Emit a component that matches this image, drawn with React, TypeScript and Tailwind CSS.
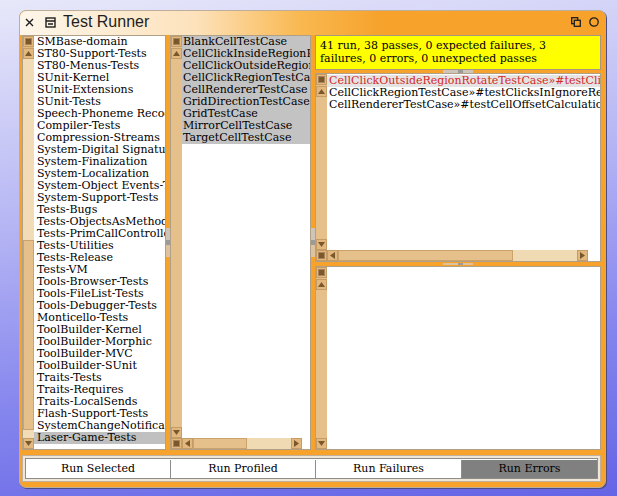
import React from "react";

const serif = "font-['DejaVu_Serif','Liberation_Serif',serif]";

const leftItems = [
  "SMBase-domain",
  "ST80-Support-Tests",
  "ST80-Menus-Tests",
  "SUnit-Kernel",
  "SUnit-Extensions",
  "SUnit-Tests",
  "Speech-Phoneme Recognition",
  "Compiler-Tests",
  "Compression-Streams",
  "System-Digital Signatures",
  "System-Finalization",
  "System-Localization",
  "System-Object Events-Tests",
  "System-Support-Tests",
  "Tests-Bugs",
  "Tests-ObjectsAsMethods",
  "Tests-PrimCallController",
  "Tests-Utilities",
  "Tests-Release",
  "Tests-VM",
  "Tools-Browser-Tests",
  "Tools-FileList-Tests",
  "Tools-Debugger-Tests",
  "Monticello-Tests",
  "ToolBuilder-Kernel",
  "ToolBuilder-Morphic",
  "ToolBuilder-MVC",
  "ToolBuilder-SUnit",
  "Traits-Tests",
  "Traits-Requires",
  "Traits-LocalSends",
  "Flash-Support-Tests",
  "SystemChangeNotification-Tests",
  "Laser-Game-Tests",
];

const midItems = [
  "BlankCellTestCase",
  "CellClickInsideRegionPlacementTestCase",
  "CellClickOutsideRegionRotateTestCase",
  "CellClickRegionTestCase",
  "CellRendererTestCase",
  "GridDirectionTestCase",
  "GridTestCase",
  "MirrorCellTestCase",
  "TargetCellTestCase",
];

const failures = [
  "CellClickOutsideRegionRotateTestCase»#testClicksInIgnoreRegion",
  "CellClickRegionTestCase»#testClicksInIgnoreRegion",
  "CellRendererTestCase»#testCellOffsetCalculation",
];

type K = "menu" | "up" | "down" | "left" | "right";

function SB({ k }: { k: K }) {
  return (
    <div className="w-[11px] h-[11px] shrink-0 bg-[#e2b87e] border border-[#c69c66] flex items-center justify-center">
      <svg width="7" height="7" viewBox="0 0 7 7" className="block">
        {k === "menu" && (
          <rect x="0.5" y="0.5" width="6" height="6" fill="#7a582c" stroke="#a88458" strokeWidth="1" />
        )}
        {k === "up" && <polygon points="3.5,1 7,6 0,6" fill="#7a582c" />}
        {k === "down" && <polygon points="0,1 7,1 3.5,6" fill="#7a582c" />}
        {k === "left" && <polygon points="1,3.5 6,0 6,7" fill="#7a582c" />}
        {k === "right" && <polygon points="1,0 6,3.5 1,7" fill="#7a582c" />}
      </svg>
    </div>
  );
}

function VHandle() {
  return (
    <div className="w-[4px] self-stretch flex flex-col justify-center">
      <div className="h-[12px] bg-[#cfc4b8]" />
      <div className="h-[5px] bg-[#9a9a9a]" />
      <div className="h-[12px] bg-[#dcc29e]" />
    </div>
  );
}

function HHandle({ light }: { light: string }) {
  return (
    <div className="flex justify-center items-center h-full">
      <div className={`w-[15px] h-full ${light}`} />
      <div className="w-[5px] h-full bg-[#9a9a9a]" />
      <div className={`w-[10px] h-full ${light}`} />
    </div>
  );
}

export default function App() {
  return (
    <div className="w-[617px] h-[496px] overflow-hidden bg-[linear-gradient(172deg,#e8e8fa_0%,#b4b4f4_40%,#8686ee_70%,#6464e6_100%)] pl-[19px] pt-[10px]">
      <div className="w-[587px] h-[478px] rounded-[7px] border border-[#bcae9a] bg-[#f6a22b] shadow-[1px_1px_0_0_#4c4c80] overflow-hidden flex flex-col">
        {/* Title bar */}
        <div className="h-[24px] shrink-0 flex items-center pb-[2px] pl-[5px] pr-[6px] bg-[linear-gradient(to_right,#fdf6ea_0%,#fde2bc_30%,#f9b850_48%,#f6a22b_62%)]">
          <svg width="9" height="9" viewBox="0 0 9 9" className="block">
            <path d="M1 1 L8 8 M8 1 L1 8" stroke="#1e1e1e" strokeWidth="1.4" />
          </svg>
          <svg width="11" height="11" viewBox="0 0 11 11" className="block ml-[11px]">
            <rect x="1" y="1" width="9" height="9" fill="none" stroke="#1e1e1e" strokeWidth="1.4" />
            <path d="M1 4 H10 M3 7 H8" stroke="#1e1e1e" strokeWidth="1.3" />
          </svg>
          <span className="ml-[7px] font-['Liberation_Sans',Arial,sans-serif] text-[16px] leading-none text-[#1e1e1e]">
            Test Runner
          </span>
          <div className="ml-auto flex items-center gap-[8px]">
            <svg width="10" height="10" viewBox="0 0 10 10" className="block">
              <rect x="0.7" y="0.7" width="6" height="6" fill="none" stroke="#1e1e1e" strokeWidth="1.3" />
              <rect x="3.3" y="3.3" width="6" height="6" fill="#f6a22b" stroke="#1e1e1e" strokeWidth="1.3" />
            </svg>
            <svg width="10" height="10" viewBox="0 0 10 10" className="block">
              <circle cx="5" cy="5" r="4.2" fill="none" stroke="#1e1e1e" strokeWidth="1.3" />
            </svg>
          </div>
        </div>

        {/* Body */}
        <div className={`flex-1 flex flex-col pl-[2px] pr-[4px] pb-[5px] ${serif} text-[11px] text-black`}>
          <div className="h-[415px] flex">
            {/* Left pane */}
            <div className="w-[144px] h-full border border-[#b0a088] bg-white flex">
              <div className="w-[11px] h-full flex flex-col bg-[#f2dcb8]">
                <SB k="menu" />
                <div className="h-[1px] bg-[#e2b87e]" />
                <SB k="up" />
                <div className="h-[181px]" />
                <div className="flex-1 bg-[#e6c08a] border border-[#caa26c]" />
                <div className="h-[8px]" />
                <SB k="down" />
              </div>
              <div className="flex-1 overflow-hidden">
                {leftItems.map((t, i) => (
                  <div
                    key={t}
                    className={`h-[12px] leading-[12px] pl-[3px] whitespace-nowrap overflow-hidden ${
                      i === leftItems.length - 1 ? "bg-[#c0c0c0]" : ""
                    }`}
                  >
                    {t}
                  </div>
                ))}
              </div>
            </div>

            <VHandle />

            {/* Middle pane */}
            <div className="w-[141px] h-full border border-[#b0a088] bg-white flex flex-col">
              <div className="flex-1 flex min-h-0">
                <div className="w-[11px] h-full flex flex-col bg-[#e6c08a]">
                  <SB k="menu" />
                  <div className="h-[1px]" />
                  <SB k="up" />
                  <div className="flex-1" />
                  <SB k="down" />
                </div>
                <div className="flex-1 overflow-hidden">
                  {midItems.map((t) => (
                    <div
                      key={t}
                      className="h-[12px] leading-[12px] pl-[1px] whitespace-nowrap overflow-hidden bg-[#c3c3c3]"
                    >
                      {t}
                    </div>
                  ))}
                </div>
              </div>
              <div className="h-[11px] flex">
                <SB k="menu" />
                <SB k="left" />
                <div className="w-[54px] bg-[#e6c08a] border border-[#caa26c]" />
                <div className="w-[44px] bg-[#f0dab4]" />
                <SB k="right" />
                <div className="flex-1 bg-white" />
              </div>
            </div>

            <VHandle />

            {/* Right column */}
            <div className="w-[286px] h-full flex flex-col">
              <div className="h-[35px] border border-[#a89880] bg-[#ffff00] pl-[4px] pt-[3px] leading-[13px] whitespace-nowrap overflow-hidden">
                41 run, 38 passes, 0 expected failures, 3
                <br />
                failures, 0 errors, 0 unexpected passes
              </div>
              <div className="h-[3px]">
                <HHandle light="bg-[#cfc4b8]" />
              </div>
              <div className="h-[189px] border border-[#b0a088] bg-white flex flex-col">
                <div className="flex-1 flex min-h-0">
                  <div className="w-[11px] h-full flex flex-col bg-[#e6c08a]">
                    <SB k="menu" />
                    <div className="h-[1px]" />
                    <SB k="up" />
                    <div className="flex-1" />
                    <SB k="down" />
                  </div>
                  <div className="flex-1 overflow-hidden pt-[1px]">
                    {failures.map((t, i) => (
                      <div
                        key={t}
                        className={`h-[12px] leading-[12px] pl-[2px] whitespace-nowrap overflow-hidden ${
                          i === 0 ? "bg-[#e4e4e4] text-[#d42828]" : ""
                        }`}
                      >
                        {t}
                      </div>
                    ))}
                  </div>
                </div>
                <div className="h-[11px] flex">
                  <SB k="menu" />
                  <SB k="left" />
                  <div className="w-[175px] bg-[#e6c08a] border border-[#caa26c]" />
                  <div className="w-[64px] bg-[#f0dab4]" />
                  <SB k="right" />
                  <div className="flex-1 bg-white" />
                </div>
              </div>
              <div className="h-[4px] py-[1px]">
                <HHandle light="bg-[#dcc29e]" />
              </div>
              <div className="flex-1 border border-[#b0a088] bg-white flex">
                <div className="w-[11px] h-full flex flex-col bg-[#e6c08a]">
                  <SB k="menu" />
                  <div className="h-[1px]" />
                  <SB k="up" />
                  <div className="flex-1" />
                  <SB k="down" />
                </div>
                <div className="flex-1" />
              </div>
            </div>
          </div>

          {/* Buttons */}
          <div className="mt-[5px] h-[27px] border border-[#c0b09c] bg-[#efe6d8] p-[2px]">
            <div className="h-full flex border border-[#8c8c8c] bg-white pt-[1px]">
              <div className="w-[145px] border-r border-[#8c8c8c] flex items-center justify-center">
                Run Selected
              </div>
              <div className="w-[145px] border-r border-[#8c8c8c] flex items-center justify-center">
                Run Profiled
              </div>
              <div className="w-[146px] border-r border-[#8c8c8c] flex items-center justify-center">
                Run Failures
              </div>
              <div className="flex-1 bg-[#808080] flex items-center justify-center">Run Errors</div>
            </div>
          </div>
        </div>
      </div>
    </div>
  );
}
